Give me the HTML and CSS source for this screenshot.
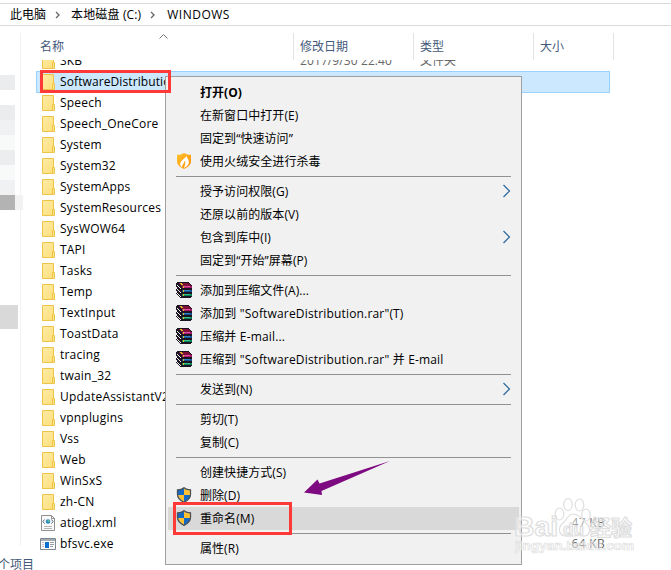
FILE: index.html
```
<!DOCTYPE html>
<html lang="zh-CN">
<head>
<meta charset="utf-8">
<title>WINDOWS</title>
<link rel="stylesheet" href="styles.css">
</head>
<body>
<svg class="defs" width="0" height="0" aria-hidden="true">
  <defs>
    <linearGradient id="fold" x1="0" y1="0" x2="1" y2="1"><stop offset="0" stop-color="#ffeba5"/><stop offset="1" stop-color="#ffdf7c"/></linearGradient>
    <linearGradient id="flame" x1="0" y1="0" x2="1" y2="1"><stop offset="0" stop-color="#ffc52e"/><stop offset="1" stop-color="#ff8a00"/></linearGradient>
    <symbol id="folder" viewBox="0 0 16 18">
      <path d="M2.500 1.500h11v15h-11z" fill="url(#fold)" stroke="#ecc548"/>
      <path d="M12.500 10.500h2v6h-2z" fill="#ffe48c" stroke="#ecc548"/>
    </symbol>
    <symbol id="shield" viewBox="0 0 16 16">
      <path d="M8 .8C6 2.400 3.800 2.900 1.500 2.900v4.400c0 3.800 2.800 6.300 6.500 8 3.700-1.700 6.500-4.200 6.500-8V2.900C12.200 2.900 10 2.400 8 .8z" fill="#1469c7" stroke="#4c5054" stroke-width="1.300"/>
      <path d="M8 1.600C10 3 11.800 3.500 13.900 3.600V8H8z" fill="#ffc131"/>
      <path d="M2.200 8H8v6.500C5 13 2.600 11 2.200 8z" fill="#ffc131"/>
    </symbol>
    <symbol id="books" viewBox="0 0 16 16" shape-rendering="crispEdges">
      <path d="M1 0h11l4 4v1h-1v1h1v3h-1v1h1v4l-1 2H5l-5-4v-1l1-1-1-2V7l1-1-1-2V1z" fill="#1c1420"/>
      <path d="M2 1h10l3 3H5z" fill="#7d1038"/>
      <path d="M6 4h10v2H6z" fill="#a81868"/><path d="M7 4h7v1H7z" fill="#e050a8"/>
      <path d="M6 8h10v2H6z" fill="#14508e"/><path d="M7 8h7v1H7z" fill="#2f82cc"/>
      <path d="M6 12h10v2H6z" fill="#0a8058"/><path d="M7 12h7v1H7z" fill="#30c48c"/>
      <path d="M1 3h1v1h1v1h1v1H3V5H2V4H1zM1 7h1v1h1v1h1v1H3V9H2V8H1zM1 11h1v1h1v1h1v1H3v-1H2v-1H1zM4 6h1v1H4zM4 10h1v1H4zM4 14h1v1H4z" fill="#f4f4f4"/>
      <path d="M4 1h2v1h1v1H5V2H4zM7 4h1v2H7zM7 8h1v2H7zM7 12h1v2H7z" fill="#dcc428"/>
    </symbol>
    <symbol id="huorong" viewBox="0 0 16 16">
      <path d="M8 0C6 1.300 3.500 1.800 1 1.800v6.400c0 3.500 3 6 7 7.800 4-1.800 7-4.300 7-7.800V1.800C12.500 1.800 10 1.300 8 0z" fill="url(#flame)"/>
      <path d="M10.500 2.500c-.5 3-5.700 4-6.400 8.700 0 1.400 1 2.300 2.100 3-.2-3 2-4 2.800-6.700 1 2-.2 4-1 7.500 4-1.800 5.600-4.500 4.500-7.800-.5-1.800-1.800-2.300-2-4.700z" fill="#fff"/>
    </symbol>
    <symbol id="chev" viewBox="0 0 10 14"><path d="M1.500 1l6 6-6 6" fill="none" stroke="#28689e" stroke-width="1.200"/></symbol>
  </defs>
</svg>

<div class="window">
  <nav class="crumbs"><span class="c1">此电脑</span><svg class="sep" viewBox="0 0 6 8"><path d="M1 1l3 3-3 3"/></svg><span class="c2">本地磁盘 (C:)</span><svg class="sep" viewBox="0 0 6 8"><path d="M1 1l3 3-3 3"/></svg><span class="c3">WINDOWS</span></nav>
  <div class="main">
    <aside class="tree">
      <i class="b1"></i><i></i><i class="b3"></i><i class="b4"></i><i class="b5"></i><i class="b6"></i><i class="b5"></i><i class="b4"></i><i class="b7"></i><i class="b8"></i>
    </aside>
    <section class="files">
      <header class="head">
        <span class="name">名称</span><span>修改日期</span><span>类型</span><span>大小</span>
        <svg class="sort" viewBox="0 0 9 5"><path d="M.5 4.500l4-4 4 4"/></svg>
      </header>
      <div class="rows">
        <div class="row"><svg><use href="#folder"/></svg><span class="fn">SKB</span><span class="date">2017/9/30 22:40</span><span class="type">文件夹</span></div>
        <div class="row selected"><svg><use href="#folder"/></svg><span class="fn">SoftwareDistribution</span></div>
        <div class="row"><svg><use href="#folder"/></svg><span class="fn">Speech</span></div>
        <div class="row"><svg><use href="#folder"/></svg><span class="fn">Speech_OneCore</span></div>
        <div class="row"><svg><use href="#folder"/></svg><span class="fn">System</span></div>
        <div class="row"><svg><use href="#folder"/></svg><span class="fn">System32</span></div>
        <div class="row"><svg><use href="#folder"/></svg><span class="fn">SystemApps</span></div>
        <div class="row"><svg><use href="#folder"/></svg><span class="fn">SystemResources</span></div>
        <div class="row"><svg><use href="#folder"/></svg><span class="fn">SysWOW64</span></div>
        <div class="row"><svg><use href="#folder"/></svg><span class="fn">TAPI</span></div>
        <div class="row"><svg><use href="#folder"/></svg><span class="fn">Tasks</span></div>
        <div class="row"><svg><use href="#folder"/></svg><span class="fn">Temp</span></div>
        <div class="row"><svg><use href="#folder"/></svg><span class="fn">TextInput</span></div>
        <div class="row"><svg><use href="#folder"/></svg><span class="fn">ToastData</span></div>
        <div class="row"><svg><use href="#folder"/></svg><span class="fn">tracing</span></div>
        <div class="row"><svg><use href="#folder"/></svg><span class="fn">twain_32</span></div>
        <div class="row"><svg><use href="#folder"/></svg><span class="fn">UpdateAssistantV2</span></div>
        <div class="row"><svg><use href="#folder"/></svg><span class="fn">vpnplugins</span></div>
        <div class="row"><svg><use href="#folder"/></svg><span class="fn">Vss</span></div>
        <div class="row"><svg><use href="#folder"/></svg><span class="fn">Web</span></div>
        <div class="row"><svg><use href="#folder"/></svg><span class="fn">WinSxS</span></div>
        <div class="row"><svg><use href="#folder"/></svg><span class="fn">zh-CN</span></div>
        <div class="row"><svg viewBox="0 0 16 18"><path d="M1.500 1.500h10l3 3v12h-13z" fill="#fafafa" stroke="#8f8f8f"/><path d="M11.500 1.500v3h3" fill="none" stroke="#8f8f8f"/><circle cx="8" cy="7.500" r="2.300" fill="#2a8ac0"/><circle cx="8.500" cy="7" r="1" fill="#67c48e"/><path d="M4.500 5.500l-1.500 2 1.500 2M11.500 5.500l1.500 2-1.500 2" fill="none" stroke="#567"/><path d="M4 12.500h8M4 14.500h8" stroke="#b5b5b5"/></svg><span class="fn">atiogl.xml</span><span class="size">47 KB</span></div>
        <div class="row"><svg viewBox="0 0 16 18"><path d="M.5 3.500h15v11H.5z" fill="#fff" stroke="#7d8790"/><path d="M1 4h14v2H1z" fill="#a4acb2"/><path d="M2 7h2v1H2zM2 9h2v1H2zM2 11h2v1H2z" fill="#bbc"/><path d="M5 7h4v6H5z" fill="#0a70d0"/><path d="M10 7.500h4M10 9.500h4M10 11.500h3" stroke="#98a0a6"/></svg><span class="fn">bfsvc.exe</span><span class="size">64 KB</span></div>
      </div>
    </section>
  </div>
  <footer class="status">个项目</footer>
</div>

<ul class="menu">
  <li class="bold">打开(O)</li>
  <li>在新窗口中打开(E)</li>
  <li>固定到“快速访问”</li>
  <li><svg class="ico"><use href="#huorong"/></svg>使用火绒安全进行杀毒</li>
  <li class="line"></li>
  <li>授予访问权限(G)<svg class="more"><use href="#chev"/></svg></li>
  <li>还原以前的版本(V)</li>
  <li>包含到库中(I)<svg class="more"><use href="#chev"/></svg></li>
  <li>固定到“开始”屏幕(P)</li>
  <li class="line"></li>
  <li><svg class="ico"><use href="#books"/></svg>添加到压缩文件(A)...</li>
  <li class="wide"><svg class="ico"><use href="#books"/></svg>添加到 "SoftwareDistribution.rar"(T)</li>
  <li class="wide"><svg class="ico"><use href="#books"/></svg>压缩并 E-mail...</li>
  <li class="wide"><svg class="ico"><use href="#books"/></svg>压缩到 "SoftwareDistribution.rar" 并 E-mail</li>
  <li class="line"></li>
  <li>发送到(N)<svg class="more"><use href="#chev"/></svg></li>
  <li class="line"></li>
  <li>剪切(T)</li>
  <li>复制(C)</li>
  <li class="line"></li>
  <li>创建快捷方式(S)</li>
  <li><svg class="ico"><use href="#shield"/></svg>删除(D)</li>
  <li class="hover"><svg class="ico"><use href="#shield"/></svg>重命名(M)</li>
  <li class="line"></li>
  <li>属性(R)</li>
</ul>

<div class="box box-folder"></div>
<div class="box box-rename"></div>
<svg class="arrow" viewBox="0 0 90 40"><path d="M0 32.500L13.500 19.500l2 4L86 1 17.500 31l.5 4z" fill="#7d0a80"/></svg>
<svg class="mark" viewBox="0 0 131 62">
  <g fill="#fff" fill-opacity=".4" stroke="#dedede" stroke-width="1.200">
    <ellipse cx="48.500" cy="20" rx="4.300" ry="6"/><ellipse cx="57" cy="10.500" rx="4.300" ry="6"/><ellipse cx="68.500" cy="11" rx="4.300" ry="6"/><ellipse cx="75" cy="21" rx="4.300" ry="6"/>
    <path d="M62 20c-5 0-6 6-10 9-5 4-5 12 2 13 5 .8 12-1 17 0 8 1 9.500-7 5-12-4-4-7.500-10-14-10z"/>
    <text x="3" y="42" class="bai" textLength="44" lengthAdjust="spacingAndGlyphs">Bai</text>
    <text x="52" y="41" class="du">du</text>
    <text x="79" y="41" class="jing">经验</text>
    <text x="4" y="56" class="url" textLength="119" lengthAdjust="spacingAndGlyphs">jingyan.baidu.com</text>
  </g>
</svg>
</body>
</html>
```
FILE: styles.css
```
* { box-sizing: border-box; }
html, body { margin: 0; height: 100%; overflow: hidden; background: #fff; }
body { position: relative; font: 12px/21px "Open Sans", "Noto Sans CJK SC", sans-serif; color: #000; }
svg { flex: none; }
.defs { position: absolute; }
.window { display: flex; flex-direction: column; height: 570px; }
.crumbs { display: flex; align-items: center; height: 23px; margin-top: 3px; padding-left: 10px; border: solid #d9d9d9; border-width: 1px 0; white-space: nowrap; }
.crumbs .c2 { letter-spacing: .15px; margin-left: 1px; }
.crumbs .c3 { letter-spacing: .5px; margin-left: 2px; }
.sep { width: 6px; height: 8px; margin: 0 9px; fill: none; stroke: #666; stroke-width: 1.300; }
.main { display: flex; height: 529px; }
.tree { width: 21px; border-right: 1px solid #f2f2f2; margin-top: 7px; padding-top: 42px; height: 513px; }
.tree i { display: block; width: 15px; height: 15px; }
.tree .b1, .tree .b3 { background: #ebecee; }
.tree .b4 { background: #f0f1f3; }
.tree .b5 { background: #f8faf9; }
.tree .b6 { background: #ebedee; }
.tree .b7 { background: #b3b3b3; box-shadow: 8px 0 0 #f2f2f2; }
.tree .b8 { background: #d9d9d9; width: 18px; height: 24px; margin-top: 95px; }
.files { flex: 1; }
.head { position: relative; display: grid; grid-template-columns: 273px 120px 120px 80px; height: 34px; padding-top: 7px; color: #44597a; }
.head span { border-right: 1px solid #e3e3e3; padding-left: 6px; height: 27px; line-height: 28px; }
.head .name { padding-left: 19px; }
.sort { position: absolute; left: 138px; top: 8px; width: 9px; height: 5px; fill: none; stroke: #777; }
.rows { height: 493px; padding-left: 15px; overflow: hidden; }
.row { display: grid; grid-template-columns: 20px 240px 120px 1fr; height: 21px; align-items: center; padding-left: 4px; width: 574px; letter-spacing: .21px; line-height: 20px; }
.row:first-child { margin-top: -10px; }
.row svg { width: 16px; height: 18px; }
.row .date, .row .type, .row .size { color: #666; }
.row .date { letter-spacing: .1px; }
.row .type { letter-spacing: 0; }
.row .size { grid-column: 4; justify-self: end; margin-right: 5px; letter-spacing: .3px; }
.selected { height: 22px; margin-bottom: -1px; padding-left: 3px; background: #cce8ff; border: 1px solid #99d1ff; letter-spacing: .1px; }
.status { height: 16px; margin-left: -2px; color: #44597a; line-height: 21px; }
.menu { position: absolute; left: 165px; top: 76px; width: 357px; height: 489px; margin: 0; padding: 4px 2px; list-style: none; background: #f1f1f1; border: 1px solid #a0a0a0; }
.menu li { display: flex; align-items: center; height: 23px; padding-left: 32px; line-height: 22px; white-space: pre; letter-spacing: .06px; }
.menu .wide { letter-spacing: .17px; }
.menu .line { height: 1px; margin: 3px 8px; padding: 0; background: #919191; }
.menu .bold { font-weight: 700; }
.menu .hover { background: #d9d9d9; }
.ico { width: 16px; height: 16px; margin: -1px 8px 0 -24px; }
.more { width: 10px; height: 14px; margin: -2px 7px 0 auto; }
.box { position: absolute; border: 3px solid #ff3838; }
.box-folder { left: 40px; top: 70px; width: 131px; height: 23px; }
.box-rename { left: 173px; top: 502px; width: 119px; height: 33px; }
.arrow { position: absolute; left: 304px; top: 460px; width: 90px; height: 40px; }
.mark { position: absolute; left: 511px; top: 494px; width: 131px; height: 62px; }
.bai { font: 700 27px "Liberation Sans", sans-serif; }
.du { font: 700 17px "Liberation Sans", sans-serif; }
.jing { font: 700 21px "Noto Sans CJK SC", sans-serif; }
.url { font: 700 13px "Liberation Sans", sans-serif; stroke-width: .7; }
```
